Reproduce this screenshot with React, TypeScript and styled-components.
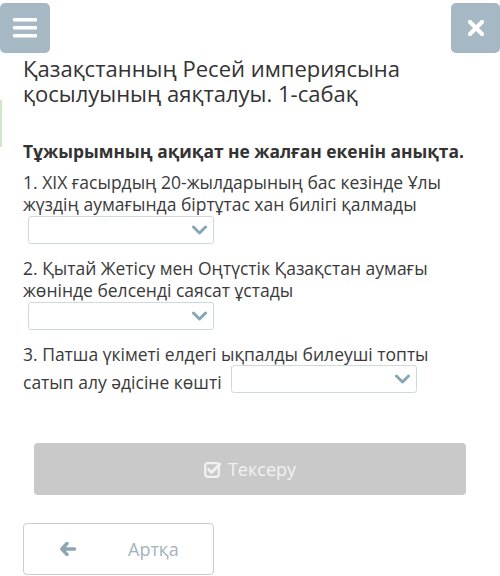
import React from "react";
import styled, { createGlobalStyle } from "styled-components";

const GlobalStyle = createGlobalStyle`
  html, body {
    margin: 0;
    padding: 0;
    background: #ffffff;
  }
  body {
    font-family: "Open Sans", "Noto Sans", sans-serif;
    color: #333333;
  }
`;

const Page = styled.div`
  position: relative;
  width: 500px;
  height: 576px;
  overflow: hidden;
  padding-top: 3px;
  box-sizing: border-box;
`;

const SideTab = styled.div`
  position: absolute;
  left: 0;
  top: 100px;
  width: 2px;
  height: 47px;
  background: #cfe8c8;
`;

const TopBar = styled.div`
  display: flex;
  justify-content: space-between;
  height: 50px;
`;

const IconButton = styled.button<{ $w?: number }>`
  width: ${(p) => p.$w ?? 50}px;
  height: 50px;
  border: none;
  border-radius: 5px;
  background: #a6b8c3;
  display: flex;
  align-items: center;
  justify-content: center;
  padding: 0;
`;

const Content = styled.div`
  padding: 0 23px;
`;

const Title = styled.h1`
  margin: 3px 0 0;
  font-size: 22px;
  font-weight: 400;
  line-height: 25px;
  color: #333333;
`;

const Instruction = styled.p`
  margin: 34px 0 0;
  font-size: 17.4px;
  font-weight: 700;
  line-height: 22px;
  color: #333333;
`;

const Question = styled.div<{ $top: number }>`
  margin-top: ${(p) => p.$top}px;
  font-size: 17.5px;
  line-height: 22px;
  color: #3a3a3a;
`;

/* inline-flex takes the chevron's bottom as its baseline, so the inline
   variant is lifted to sit with its lower edge just under the text */
const SelectBox = styled.span<{ $block?: boolean }>`
  display: ${(p) => (p.$block ? "flex" : "inline-flex")};
  align-items: center;
  justify-content: flex-end;
  box-sizing: border-box;
  width: 186px;
  height: 28px;
  margin: ${(p) => (p.$block ? "1px 0 0 5px" : "0 0 0 9px")};
  padding-right: 6px;
  border: 1px solid #cfd9de;
  border-radius: 3px;
  background: #ffffff;
  vertical-align: 5px;
`;

const Actions = styled.div`
  padding: 0 34px;
  margin-top: 50px;
`;

const CheckButton = styled.button`
  width: 100%;
  height: 52px;
  border: none;
  border-radius: 4px;
  background: #c9c9c9;
  color: #f2f2f2;
  font-family: "Open Sans", sans-serif;
  font-size: 18px;
  display: flex;
  align-items: center;
  justify-content: center;
  gap: 6px;
  padding: 0;
`;

const BackButton = styled.button`
  margin: 28px 0 0 23px;
  width: 191px;
  height: 52px;
  border: 1px solid #c8cdd0;
  border-radius: 4px;
  background: #ffffff;
  display: flex;
  align-items: center;
  padding: 0 0 0 36px;
  box-sizing: border-box;
  font-family: "Open Sans", sans-serif;
  font-size: 18px;
  color: #a3b3bd;
`;

const BackLabel = styled.span`
  margin-left: 52px;
`;

const Chevron = () => (
  <svg width="15" height="10" viewBox="0 0 15 10">
    <path d="M1.5 2 L7.5 8 L13.5 2" fill="none" stroke="#86a8b2" strokeWidth="3" strokeLinecap="round" strokeLinejoin="round" />
  </svg>
);

const Select = ({ block }: { block?: boolean }) => (
  <SelectBox $block={block}>
    <Chevron />
  </SelectBox>
);

const MenuIcon = () => (
  <svg width="24" height="20" viewBox="0 0 24 20">
    <rect x="0" y="0" width="24" height="3.6" rx="1" fill="#ffffff" />
    <rect x="0" y="8" width="24" height="3.6" rx="1" fill="#ffffff" />
    <rect x="0" y="16" width="24" height="3.6" rx="1" fill="#ffffff" />
  </svg>
);

const CloseIcon = () => (
  <svg width="18" height="18" viewBox="0 0 18 18">
    <path d="M3 3 L15 15 M15 3 L3 15" stroke="#ffffff" strokeWidth="4.2" strokeLinecap="round" />
  </svg>
);

const CheckSquareIcon = () => (
  <svg width="18" height="17" viewBox="0 0 18 17">
    <rect x="1.2" y="2.2" width="13.6" height="13.6" rx="2.5" fill="none" stroke="#f2f2f2" strokeWidth="2.2" />
    <path d="M4.5 8.5 L7.5 11.5 L16 3" fill="none" stroke="#f2f2f2" strokeWidth="2.6" strokeLinecap="round" strokeLinejoin="round" />
  </svg>
);

const ArrowLeftIcon = () => (
  <svg width="16" height="14" viewBox="0 0 16 14">
    <path d="M7 1.5 L1.8 7 L7 12.5 M2.5 7 L14.5 7" fill="none" stroke="#8ea6b3" strokeWidth="3.4" strokeLinecap="round" strokeLinejoin="round" />
  </svg>
);

export default function App() {
  return (
    <Page>
      <GlobalStyle />
      <SideTab />
      <TopBar>
        <IconButton aria-label="Мәзір">
          <MenuIcon />
        </IconButton>
        <IconButton $w={49} aria-label="Жабу">
          <CloseIcon />
        </IconButton>
      </TopBar>
      <Content>
        <Title>
          Қазақстанның Ресей империясына
          <br />
          қосылуының аяқталуы. 1-сабақ
        </Title>
        <Instruction>Тұжырымның ақиқат не жалған екенін анықта.</Instruction>
        <Question $top={9}>
          1. XIX ғасырдың 20-жылдарының бас кезінде Ұлы
          <br />
          жүздің аумағында біртұтас хан билігі қалмады
          <Select block />
        </Question>
        <Question $top={13}>
          2. Қытай Жетісу мен Оңтүстік Қазақстан аумағы
          <br />
          жөнінде белсенді саясат ұстады
          <Select block />
        </Question>
        <Question $top={13}>
          3. Патша үкіметі елдегі ықпалды билеуші топты
          <br />
          сатып алу әдісіне көшті
          <Select />
        </Question>
      </Content>
      <Actions>
        <CheckButton>
          <CheckSquareIcon />
          Тексеру
        </CheckButton>
      </Actions>
      <BackButton>
        <ArrowLeftIcon />
        <BackLabel>Артқа</BackLabel>
      </BackButton>
    </Page>
  );
}
